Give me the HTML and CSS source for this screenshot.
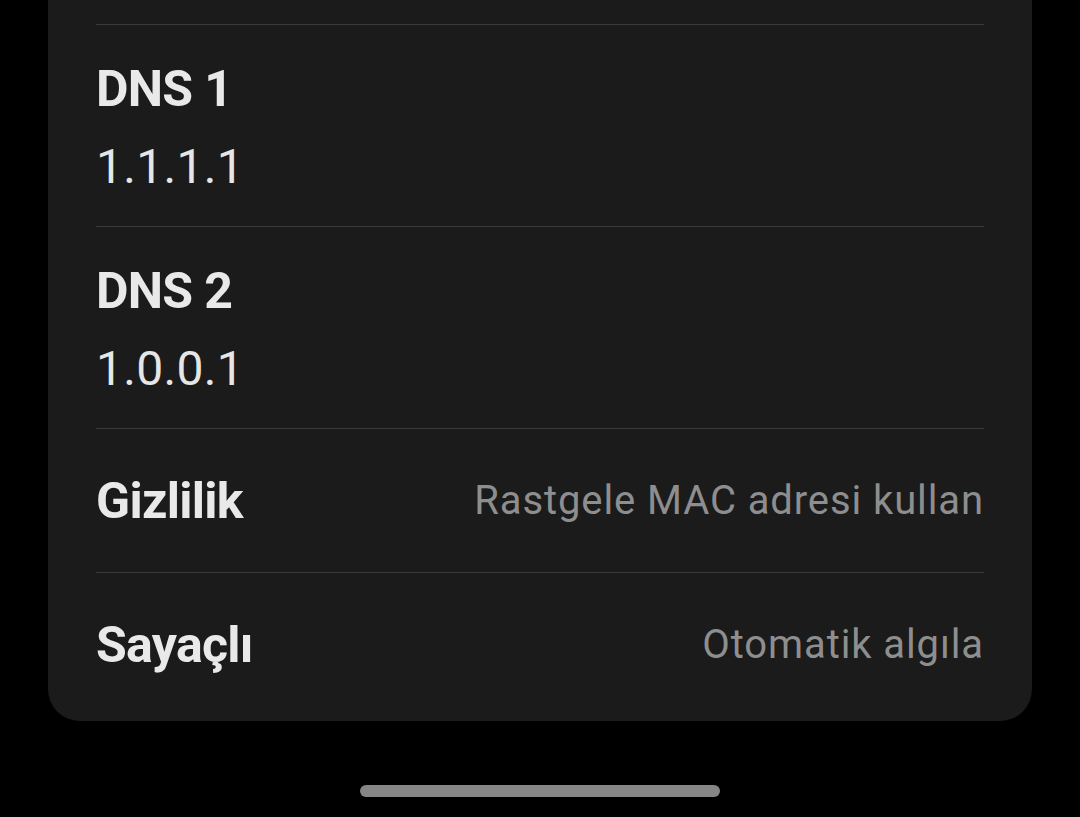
FILE: index.html
```html
<!DOCTYPE html>
<html lang="tr">
<head>
<meta charset="utf-8">
<link rel="stylesheet" href="styles.css">
</head>
<body>
<div class="screen">
  <div class="card">
    <div class="row row-stack">
      <div class="title">DNS 1</div>
      <div class="value">1.1.1.1</div>
    </div>
    <div class="row row-stack">
      <div class="title">DNS 2</div>
      <div class="value">1.0.0.1</div>
    </div>
    <div class="row row-inline">
      <div class="title">Gizlilik</div>
      <div class="side">Rastgele MAC adresi kullan</div>
    </div>
    <div class="row row-inline">
      <div class="title">Sayaçlı</div>
      <div class="side">Otomatik algıla</div>
    </div>
  </div>
  <div class="home-area">
    <div class="home-bar"></div>
  </div>
</div>
</body>
</html>
```
FILE: styles.css
```css
html, body {
  margin: 0;
  padding: 0;
  background: #000;
}
body {
  font-family: Roboto, "Liberation Sans", sans-serif;
  width: 1080px;
  height: 817px;
  overflow: hidden;
}
.screen {
  display: flex;
  flex-direction: column;
  height: 817px;
}
.card {
  margin: 0 48px;
  background: #1b1b1b;
  border-radius: 0 0 32px 32px;
  padding: 24px 48px 5px;
}
.row {
  border-top: 1px solid #3a3a3a;
}
.row-stack {
  display: flex;
  flex-direction: column;
  padding: 34px 0 30px;
}
.row-inline {
  display: flex;
  align-items: center;
  justify-content: space-between;
  height: 143px;
}
.title {
  font-size: 50px;
  line-height: 60px;
  font-weight: 700;
  letter-spacing: -0.7px;
  color: #e9e9e9;
}
.value {
  margin-top: 19px;
  font-size: 48px;
  line-height: 58px;
  letter-spacing: 0.3px;
  color: #e6e6e6;
}
.side {
  font-size: 40px;
  line-height: 48px;
  letter-spacing: 0.9px;
  color: #8e8e8e;
}
.home-area {
  display: flex;
  justify-content: center;
  padding-top: 64px;
}
.home-bar {
  width: 360px;
  height: 12px;
  border-radius: 6px;
  background: #868686;
}
```
